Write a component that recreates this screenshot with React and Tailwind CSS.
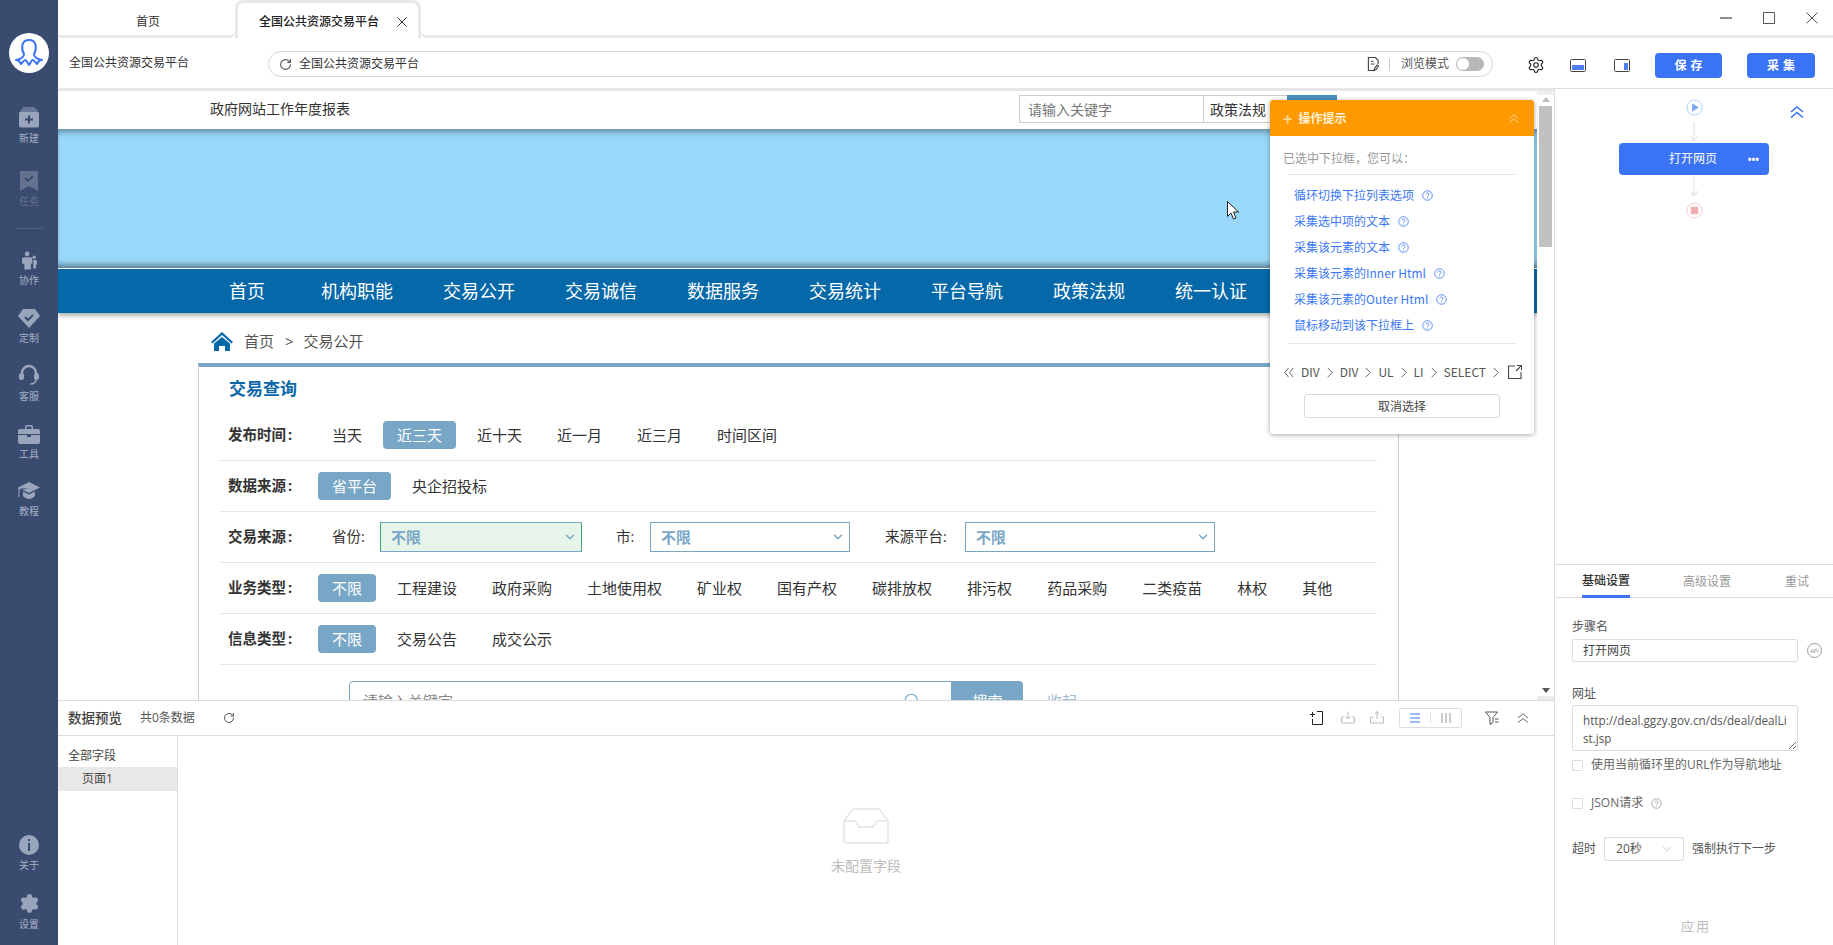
import React from "react";
import { ChevronDown, RotateCw, Search, Settings } from "lucide-react";

const navItems = ["机构职能", "交易公开", "交易诚信", "数据服务", "交易统计", "平台导航", "政策法规", "统一认证"];
const bizTypes = ["工程建设", "政府采购", "土地使用权", "矿业权", "国有产权", "碳排放权", "排污权", "药品采购", "二类疫苗", "林权", "其他"];
const tipLinks = [
  "循环切换下拉列表选项",
  "采集选中项的文本",
  "采集该元素的文本",
  "采集该元素的Inner Html",
  "采集该元素的Outer Html",
  "鼠标移动到该下拉框上",
];

const Help = ({ color = "#3b78f5" }) => (
  <svg viewBox="0 0 12 12" className="ml-[8px] h-[11px] w-[11px] shrink-0" fill="none" stroke={color}>
    <circle cx="6" cy="6" r="5.2" strokeWidth="0.9" />
    <path d="M4.4 4.8a1.6 1.6 0 1 1 2.4 1.4c-.6.35-.8.6-.8 1.2M6 8.5v1" strokeWidth="0.9" />
  </svg>
);

const Gt = () => (
  <svg viewBox="0 0 6 12" className="h-[11px] w-[6px] shrink-0" fill="none" stroke="#555" strokeWidth="1">
    <path d="M.5 1 5.5 6 .5 11" />
  </svg>
);

const DoubleUp = ({ className, width = 1 }) => (
  <svg viewBox="0 0 14 12" className={className} fill="none" stroke="currentColor" strokeWidth={width}>
    <path d="M1 6 7 1l6 5M1 11.500 7 6.500l6 5" />
  </svg>
);

const SideItem = ({ label, dim, className, children }) => (
  <div className={`flex flex-col items-center ${className}`}>
    <div className={`flex h-[22px] items-end ${dim ? "text-[#65728f]" : "text-[#98a5bb]"}`}>{children}</div>
    <span className={`mt-[3px] text-[10px] leading-[14px] ${dim ? "text-[#65728f]" : "text-[#a6b1c5]"}`}>{label}</span>
  </div>
);

const Sidebar = () => (
  <aside className="flex h-full w-[58px] shrink-0 flex-col items-center bg-[#3a4b70]">
    <div className="mt-[33px] h-[40px] w-[40px] rounded-full bg-white">
      <svg viewBox="0 0 40 40" className="h-[40px] w-[40px]" fill="none" stroke="#3b73f5" strokeWidth="2" strokeLinejoin="round">
        <path d="M15 21C12 16 12 7 20 7s8 9 5 14c0 3 3 5 8 6-3 0-4 2-5 4-2-2-3-4-4.500-4-1 0-2 3-3.500 5-1.500-2-2.500-5-3.500-5-1.500 0-2.500 2-4.500 4-1-2-2-4-5-4 5-1 8-3 8-6Z" />
      </svg>
    </div>
    <SideItem label="新建" className="mt-[33px]">
      <svg viewBox="0 0 20 20" className="h-[21px] w-[20px]" fill="currentColor">
        <path d="M4 0h12v1H4zM2 2h16v1H2z" />
        <rect y="4" width="20" height="16" rx="2" />
        <path d="M9 8h2v3h3v2h-3v3H9v-3H6v-2h3z" fill="#3a4b70" />
      </svg>
    </SideItem>
    <SideItem label="任务" dim className="mt-[24px]">
      <svg viewBox="0 0 18 20" className="h-[20px] w-[18px]" fill="currentColor">
        <path d="M0 0h18v20l-9-5-9 5z" />
        <path d="m5 7 3 3 5-5" fill="none" stroke="#3a4b70" strokeWidth="1.800" />
      </svg>
    </SideItem>
    <div className="mt-[20px] h-px w-[28px] bg-[#4f5f82]" />
    <SideItem label="协作" className="mt-[19px]">
      <svg viewBox="0 0 16 19" className="h-[19px] w-[15px]" fill="currentColor">
        <circle cx="5.500" cy="2.500" r="2.500" />
        <path d="M2 6h7a2 2 0 0 1 2 2v5H9.500v6h-7v-6H0V8a2 2 0 0 1 2-2z" />
        <circle cx="13" cy="6" r="1.800" />
        <path d="M12 9h2.500a1.500 1.500 0 0 1 1.500 1.500V14h-1v4h-3z" />
      </svg>
    </SideItem>
    <SideItem label="定制" className="mt-[19px]">
      <svg viewBox="0 0 22 19" className="h-[19px] w-[22px]" fill="currentColor">
        <path d="M5 0h12l5 7-11 12L0 7z" />
        <path d="m7 8 3 3 5-5" fill="none" stroke="#3a4b70" strokeWidth="2" />
      </svg>
    </SideItem>
    <SideItem label="客服" className="mt-[19px]">
      <svg viewBox="0 0 20 22" className="h-[22px] w-[20px]" fill="none" stroke="currentColor">
        <path d="M3 11V9a7 7 0 0 1 14 0v2" strokeWidth="2.500" />
        <rect x="0" y="9" width="5" height="7" rx="2.500" fill="currentColor" stroke="none" />
        <rect x="15" y="9" width="5" height="7" rx="2.500" fill="currentColor" stroke="none" />
        <path d="M17 15c0 3-2 5-6 5" strokeWidth="1.500" />
      </svg>
    </SideItem>
    <SideItem label="工具" className="mt-[19px]">
      <svg viewBox="0 0 22 19" className="h-[19px] w-[22px]" fill="currentColor">
        <path d="M7 4V1.500A1.500 1.500 0 0 1 8.500 0h5A1.500 1.500 0 0 1 15 1.500V4h-1.500V1.500h-5V4z" />
        <path d="M2 4h18a2 2 0 0 1 2 2v3H0V6a2 2 0 0 1 2-2zM0 10h9v2h4v-2h9v7a2 2 0 0 1-2 2H2a2 2 0 0 1-2-2z" />
      </svg>
    </SideItem>
    <SideItem label="教程" className="mt-[18px]">
      <svg viewBox="0 0 22 19" className="h-[19px] w-[22px]" fill="currentColor">
        <path d="M11 0 22 5.500 11 11 4 7.500 11 6 3 6.500 1.500 8v7H.5V7L0 5.500z" />
        <path d="M5 9.500 11 12.500 17 9.500V14c-2 2-4 3-6 3s-4-1-6-3z" />
      </svg>
    </SideItem>
    <SideItem label="关于" className="mt-auto">
      <svg viewBox="0 0 20 20" className="h-[20px] w-[20px]">
        <circle cx="10" cy="10" r="10" fill="currentColor" />
        <path d="M9 4h2v2H9zM9 8h2v8H9z" fill="#3a4b70" />
      </svg>
    </SideItem>
    <SideItem label="设置" className="mt-[20px] mb-[14px]">
      <Settings size={21} fill="currentColor" stroke="currentColor" strokeWidth={1.5} />
    </SideItem>
  </aside>
);

const TabBar = () => (
  <div className="flex h-[38px] shrink-0 text-[12px]">
    <div className="flex w-[177px] items-center justify-center rounded-br-md border-b-[3px] border-[#e8e8e8] pt-[8px] pl-[3px] text-[#333]">首页</div>
    <div className="flex w-[186px] items-center rounded-t-lg border-x-[3px] border-t-[3px] border-[#e8e8e8] pl-[21px] pt-[2px] font-medium text-[#222]">
      全国公共资源交易平台
      <svg viewBox="0 0 10 10" className="ml-[18px] h-[10px] w-[10px]" fill="none" stroke="#333">
        <path d="m.5.5 9 9M9.500.5l-9 9" />
      </svg>
    </div>
    <div className="flex flex-1 items-center justify-end gap-[31px] rounded-bl-md border-b-[3px] border-[#e8e8e8] pr-[15px]">
      <svg viewBox="0 0 12 12" className="h-[12px] w-[12px]" stroke="#666" strokeWidth="1.500">
        <path d="M0 6h12" />
      </svg>
      <svg viewBox="0 0 12 12" className="h-[12px] w-[12px]" fill="none" stroke="#555">
        <path d="M.5.5h11v11H.5z" />
      </svg>
      <svg viewBox="0 0 12 12" className="h-[12px] w-[12px]" fill="none" stroke="#555">
        <path d="m.5.5 11 11M11.500.5l-11 11" />
      </svg>
    </div>
  </div>
);

const AddressBar = () => (
  <div className="flex h-[50px] shrink-0 items-center text-[12px] text-[#333]">
    <span className="w-[210px] pl-[11px]">全国公共资源交易平台</span>
    <div className="mt-[2px] flex h-[26px] w-[1225px] items-center rounded-full border border-[#d8d8d8] pl-[10px] pr-[8px]">
      <RotateCw size={13} className="text-[#555]" />
      <span className="ml-[7px]">全国公共资源交易平台</span>
      <svg viewBox="0 0 14 16" className="ml-auto h-[16px] w-[13px]" fill="none" stroke="#444" strokeWidth="1.200">
        <path d="M9 1H1.500v14H7M9 1l3 3v4M4 5h3M4 8h4M11 9l-3 4-.5 2 2-.8 3-4z" />
      </svg>
      <div className="ml-[9px] h-[13px] w-px bg-[#ccc]" />
      <span className="ml-[11px] text-[#555]">浏览模式</span>
      <div className="ml-[7px] flex h-[14px] w-[28px] items-center rounded-full bg-[#b8b8b8]">
        <div className="h-[12px] w-[12px] translate-x-px rounded-full bg-white" />
      </div>
    </div>
    <Settings size={18} strokeWidth={1.5} className="ml-[34px] mt-[4px] text-[#222]" />
    <svg viewBox="0 0 16 13" className="ml-[25px] mt-[5px] h-[13px] w-[16px]" fill="none">
      <rect x=".5" y=".5" width="15" height="12" rx="1" stroke="#444" />
      <rect x="2" y="6" width="12" height="5" fill="#4f7df5" />
    </svg>
    <svg viewBox="0 0 16 13" className="ml-[28px] mt-[5px] h-[13px] w-[16px]" fill="none">
      <rect x=".5" y=".5" width="15" height="12" rx="1" stroke="#444" />
      <rect x="10" y="4" width="4" height="7" fill="#4f7df5" />
    </svg>
    <button className="ml-[25px] mt-[5px] h-[25px] w-[67px] rounded bg-[#3b73f5] pl-[4px] text-[12px] font-bold tracking-[4px] text-white">保存</button>
    <button className="ml-[25px] mt-[5px] h-[25px] w-[68px] rounded bg-[#3b73f5] pl-[4px] text-[12px] font-bold tracking-[4px] text-white">采集</button>
  </div>
);

const Pill = ({ active, children }) => (
  <span className={`flex h-[28px] items-center rounded px-[14px] text-[15px] ${active ? "bg-[#78a6c6] text-white" : "text-[#333]"}`}>{children}</span>
);

const FilterRow = ({ label, children }) => (
  <div className="flex h-[51px] items-center border-b border-[#e8e8e8] pl-[9px]">
    <span className="w-[90px] shrink-0 text-[14.500px] font-bold text-[#333]">
      {label}
      <span className="ml-[2px]">:</span>
    </span>
    <div className="flex items-center gap-[7px]">{children}</div>
  </div>
);

const FakeSelect = ({ className }) => (
  <div className={`flex h-[30px] items-center justify-between border pl-[10px] pr-[4px] text-[15px] font-bold text-[#78a6c6] ${className}`}>
    不限
    <ChevronDown size={14} strokeWidth={2.5} />
  </div>
);

const SourcePage = () => (
  <div className="h-full w-[1479px] shrink-0 overflow-hidden bg-white">
    <div className="flex h-[38px] items-start pr-[200px] pl-[152px] pt-[4px] text-[14px] text-[#333]">
      <span className="leading-[28px]">政府网站工作年度报表</span>
      <div className="ml-auto flex h-[28px] w-[185px] items-center border border-[#ccc] pl-[8px] text-[#777]">请输入关键字</div>
      <div className="flex h-[28px] w-[83px] items-center border-y border-[#ccc] pl-[6px]">政策法规</div>
      <div className="h-[28px] w-[50px] bg-[#4a8fbf]" />
    </div>
    <div className="h-[139px] bg-[#9ad8f9] shadow-[inset_0_7px_6px_-4px_rgba(0,0,0,0.35),inset_0_-7px_6px_-4px_rgba(0,0,0,0.45)]" />
    <div className="relative mt-px flex h-[44px] items-center bg-[#0568a9] pl-[171px] text-[18px] text-white shadow-[0_3px_4px_rgba(0,0,0,0.3)]">
      <span className="mr-[56px]">首页</span>
      <div className="flex gap-[50px]">
        {navItems.map((n) => (
          <span key={n}>{n}</span>
        ))}
      </div>
    </div>
    <div className="flex h-[50px] items-center pl-[153px] pt-[6px] text-[15px] text-[#555]">
      <svg viewBox="0 0 22 19" className="h-[19px] w-[22px]" fill="#0568a9">
        <path d="M11 0 22 10l-1.500 1.500L11 3 1.500 11.500 0 10z" />
        <path d="M3 11.500 11 5l8 6.500V19h-5v-5H8v5H3z" />
      </svg>
      <span className="ml-[11px]">首页</span>
      <span className="ml-[11px]">&gt;</span>
      <span className="ml-[10px]">交易公开</span>
    </div>
    <div className="ml-[140px] h-[400px] w-[1201px] border-x border-t-4 border-x-[#ccc] border-t-[#78a6c6]">
      <div className="flex h-[43px] items-center pl-[30px] pt-[1px] text-[17px] font-bold text-[#0b68a8]">交易查询</div>
      <div className="ml-[20px] w-[1158px]">
        <FilterRow label="发布时间">
          <Pill>当天</Pill>
          <Pill active>近三天</Pill>
          <Pill>近十天</Pill>
          <Pill>近一月</Pill>
          <Pill>近三月</Pill>
          <Pill>时间区间</Pill>
        </FilterRow>
        <FilterRow label="数据来源">
          <Pill active>省平台</Pill>
          <Pill>央企招投标</Pill>
        </FilterRow>
        <FilterRow label="交易来源">
          <span className="ml-[14px] mr-[5px] w-[36px] whitespace-nowrap text-[14.500px] text-[#333]">省份:</span>
          <FakeSelect className="w-[202px] border-[#78a6c6] border-x-[#3fa672] bg-[#e6f4e9]" />
          <span className="ml-[27px] mr-[7px] w-[20px] whitespace-nowrap text-[14.500px] text-[#333]">市:</span>
          <FakeSelect className="w-[200px] border-[#78a6c6]" />
          <span className="ml-[28px] mr-[7px] w-[66px] whitespace-nowrap text-[14.500px] text-[#333]">来源平台:</span>
          <FakeSelect className="w-[250px] border-[#78a6c6]" />
        </FilterRow>
        <FilterRow label="业务类型">
          <Pill active>不限</Pill>
          {bizTypes.map((t) => (
            <Pill key={t}>{t}</Pill>
          ))}
        </FilterRow>
        <FilterRow label="信息类型">
          <Pill active>不限</Pill>
          <Pill>交易公告</Pill>
          <Pill>成交公示</Pill>
        </FilterRow>
      </div>
      <div className="ml-[150px] mt-[16px] flex h-[40px] items-center">
        <div className="flex h-full w-[603px] items-center justify-between rounded-tl border border-[#78a6c6] pl-[13px] pr-[30px] text-[15px] text-[#888]">
          请输入关键字
          <Search size={18} strokeWidth={1.5} className="text-[#78a6c6]" />
        </div>
        <div className="flex h-full w-[71px] items-center justify-center rounded-tr bg-[#78a6c6] text-[15px] text-white">搜索</div>
        <span className="ml-[24px] text-[15px] text-[#9bbdd6]">收起 ·</span>
      </div>
    </div>
  </div>
);

const TipPopover = () => (
  <div className="absolute left-[1212px] top-[9px] z-20 h-[334px] w-[264px] rounded-[3px] bg-white font-['Noto_Sans_CJK_SC',sans-serif] shadow-[0_1px_5px_rgba(0,0,0,0.35)]">
    <div className="flex h-[36px] items-center rounded-t-[3px] bg-[#fe9a00] pl-[13px] pr-[15px] text-[12px] font-bold text-white">
      <span className="text-[16px] leading-none text-[#ffd699]">+</span>
      <span className="ml-[6px] text-[#fff1da]">操作提示</span>
      <DoubleUp className="ml-auto h-[9px] w-[10px] text-[#fff1da]" />
    </div>
    <div className="flex h-[38px] items-center pl-[13px] pt-[6px] text-[12px] text-[#999]">已选中下拉框，您可以：</div>
    <div className="mx-[18px] h-px bg-[#e6e6e6]" />
    <ul className="pb-[5px] pl-[24px] pt-[7px] text-[12px] text-[#3b78f5]">
      {tipLinks.map((t) => (
        <li key={t} className="flex h-[26px] items-center">
          {t}
          <Help />
        </li>
      ))}
    </ul>
    <div className="mx-[18px] h-px bg-[#e6e6e6]" />
    <div className="mt-[6px] flex h-[44px] items-center gap-[7px] pl-[14px] pr-[12px] text-[12px] text-[#555]">
      <svg viewBox="0 0 10 12" className="h-[11px] w-[10px]" fill="none" stroke="#555">
        <path d="M4.500 1 .5 6l4 5M9.500 1l-4 5 4 5" />
      </svg>
      DIV
      <Gt />
      DIV
      <Gt />
      UL
      <Gt />
      LI
      <Gt />
      SELECT
      <Gt />
      <svg viewBox="0 0 14 14" className="ml-auto h-[14px] w-[14px]" fill="none" stroke="#444" strokeWidth="1.100">
        <path d="M7 1H.5v12.500H13V7M8 6l5.500-5.500M9 .5h4.500V5" />
      </svg>
    </div>
    <div className="mx-auto flex h-[24px] w-[196px] items-center justify-center rounded-[3px] border border-[#d8d8d8] text-[12px] text-[#444]">取消选择</div>
  </div>
);

const WebView = () => (
  <div className="relative flex h-[612px] shrink-0 border-t-[3px] border-[#e6e6e6]">
    <SourcePage />
    <TipPopover />
    <div className="flex w-[17px] shrink-0 flex-col items-center bg-white">
      <div className="h-[4px] w-full bg-[#efefef]" />
      <div className="mt-[2px] h-0 w-0 border-x-[4px] border-b-[5px] border-x-transparent border-b-[#bbb]" />
      <div className="mt-[4px] h-[141px] w-[13px] bg-[#c1c1c1]" />
      <div className="mt-auto h-0 w-0 border-x-[4px] border-t-[5px] border-x-transparent border-t-[#555]" />
      <div className="mt-[3px] h-[4px] w-full bg-[#ececec]" />
    </div>
    <svg viewBox="0 0 12 19" className="absolute left-[1169px] top-[110px] z-10 h-[19px] w-[12px]" fill="#fff" stroke="#222" strokeWidth="1">
      <path d="M.5.5v15l3.500-3.500 2.500 6 2.500-1-2.500-6h5z" />
    </svg>
  </div>
);

const ToolIcon = ({ children }) => (
  <svg viewBox="0 0 14 14" className="h-[14px] w-[14px]" fill="none" stroke="currentColor" strokeWidth="1">
    {children}
  </svg>
);

const DataPreview = () => (
  <div className="flex h-[245px] shrink-0 flex-col border-t border-[#ddd] bg-white">
    <div className="flex h-[35px] shrink-0 items-center border-b border-[#ddd] pl-[10px] pr-[25px]">
      <span className="text-[13.500px] font-medium text-[#444]">数据预览</span>
      <span className="ml-[18px] text-[12px] text-[#555]">共0条数据</span>
      <RotateCw size={12} className="ml-[28px] text-[#555]" />
      <div className="ml-auto flex items-center">
        <span className="text-[#222]">
          <ToolIcon>
            <path d="M7 .5h5.500v13H2.500V8M2.500 1v5M0 3.500h5" />
          </ToolIcon>
        </span>
        <span className="ml-[17px] text-[#bbb]">
          <ToolIcon>
            <path d="M7 .5V8M4.500 5.500 7 8l2.500-2.500M3 6H.5v6h13V6H11" />
          </ToolIcon>
        </span>
        <span className="ml-[15px] text-[#bbb]">
          <ToolIcon>
            <path d="M7 8V.5M4.500 3 7 .5 9.500 3M3 6H.5v6h13V6H11" />
          </ToolIcon>
        </span>
        <div className="ml-[15px] flex h-[20px] w-[63px] items-center rounded-[2px] border border-[#ddd] pl-[10px]">
          <svg viewBox="0 0 10 10" className="h-[10px] w-[10px]" stroke="#3b78f5">
            <path d="M0 1h10M0 5h10M0 9h10" />
          </svg>
          <div className="ml-[10px] h-[10px] w-px bg-[#ddd]" />
          <svg viewBox="0 0 10 10" className="ml-[10px] h-[10px] w-[10px]" stroke="#999">
            <path d="M1 0v10M5 0v10M9 0v10" />
          </svg>
        </div>
        <span className="ml-[23px] text-[#555]">
          <ToolIcon>
            <path d="M.5 1h12L8 6.500v5l-3 2v-7zM10 8h3.500M10 11h3.500" />
          </ToolIcon>
        </span>
        <DoubleUp className="ml-[18px] h-[10px] w-[12px] text-[#444]" />
      </div>
    </div>
    <div className="flex flex-1">
      <div className="w-[120px] shrink-0 border-r border-[#ddd] pt-[9px] text-[12px] text-[#444]">
        <div className="h-[22px] pl-[10px] leading-[22px]">全部字段</div>
        <div className="h-[24px] bg-[#e8e8e8] pl-[24px] leading-[24px]">页面1</div>
      </div>
      <div className="flex flex-1 flex-col items-center pt-[72px]">
        <svg viewBox="0 0 46 36" className="h-[36px] w-[46px]" fill="none" stroke="#e4e4e4" strokeWidth="1.500">
          <path d="M10 1h26l9 12v20a2 2 0 0 1-2 2H3a2 2 0 0 1-2-2V13zM1 13h11c2 0 2 6 5 6h12c3 0 3-6 5-6h11" />
        </svg>
        <span className="mt-[11px] text-[14px] text-[#bbb]">未配置字段</span>
      </div>
    </div>
  </div>
);

const FlowArrow = () => (
  <svg viewBox="0 0 10 20" className="h-[20px] w-[10px]" fill="none" stroke="#ddd" strokeWidth="1">
    <path d="M5 0v19M1.500 14 5 19l3.500-5" />
  </svg>
);

const FlowPanel = () => (
  <div className="relative flex h-[476px] shrink-0 flex-col items-center border-b border-[#ddd] pt-[10px]">
    <svg viewBox="0 0 18 18" className="h-[17px] w-[17px]">
      <circle cx="9" cy="9" r="8" fill="none" stroke="#a9cdf6" />
      <path d="M6.500 4.500v9l7-4.500z" fill="#7fa6f5" />
    </svg>
    <div className="mt-[6px]">
      <FlowArrow />
    </div>
    <div className="mt-[1px] flex h-[32px] w-[150px] shrink-0 items-center justify-between rounded-[4px] bg-[#3b73f5] pl-[50px] pr-[10px] text-[12px] text-white">
      打开网页
      <span className="text-[10px] font-bold leading-none">•••</span>
    </div>
    <div className="mt-[2px]">
      <FlowArrow />
    </div>
    <svg viewBox="0 0 18 18" className="mt-[5px] h-[17px] w-[17px]">
      <circle cx="9" cy="9" r="8" fill="none" stroke="#f4c9c9" />
      <rect x="5" y="5" width="8" height="8" fill="#edafb0" />
    </svg>
    <DoubleUp width={1.6} className="absolute left-[235px] top-[17px] h-[12px] w-[14px] text-[#3b73f5]" />
  </div>
);

const StepSettings = () => (
  <div className="flex flex-1 flex-col text-[12px] text-[#555]">
    <div className="flex h-[33px] shrink-0 border-b border-[#ddd] pl-[27px] text-[#999]">
      <span className="-mb-px flex h-[33px] items-center border-b-[3px] border-[#3b73f5] pt-[2px] font-medium text-[#333]">基础设置</span>
      <span className="ml-[53px] flex items-center pt-[2px]">高级设置</span>
      <span className="ml-[54px] flex items-center pt-[2px]">重试</span>
    </div>
    <div className="pl-[17px]">
      <div className="mt-[21px] h-[16px] leading-[16px]">步骤名</div>
      <div className="mt-[4px] flex items-center">
        <div className="flex h-[23px] w-[226px] items-center rounded-[2px] border border-[#ddd] pl-[10px] text-[#444]">打开网页</div>
        <svg viewBox="0 0 15 15" className="ml-[9px] h-[15px] w-[15px]" fill="none" stroke="#999">
          <circle cx="7.500" cy="7.500" r="7" />
          <text x="7.500" y="9.800" fontSize="5.500" textAnchor="middle" fill="#888" stroke="none">API</text>
        </svg>
      </div>
      <div className="mt-[24px] h-[16px] leading-[16px]">网址</div>
      <textarea
        readOnly
        value="http://deal.ggzy.gov.cn/ds/deal/dealList.jsp"
        className="mt-[3px] block h-[46px] w-[226px] resize overflow-hidden break-all rounded-[2px] border border-[#ddd] px-[10px] py-[5px] text-[11.700px] leading-[18px] text-[#555] outline-none"
      />
      <label className="mt-[6px] flex h-[16px] items-center">
        <span className="h-[11px] w-[11px] rounded-[1px] border border-[#ddd]" />
        <span className="ml-[8px] text-[#666]">使用当前循环里的URL作为导航地址</span>
      </label>
      <label className="mt-[22px] flex h-[16px] items-center">
        <span className="h-[11px] w-[11px] rounded-[1px] border border-[#ddd]" />
        <span className="ml-[8px] text-[#666]">JSON请求</span>
        <Help color="#999" />
      </label>
      <div className="mt-[26px] flex h-[24px] items-center">
        <span>超时</span>
        <div className="ml-[8px] flex h-[24px] w-[80px] items-center justify-between rounded-[2px] border border-[#ddd] pl-[11px] pr-[9px]">
          20秒
          <ChevronDown size={14} strokeWidth={1} className="text-[#999]" />
        </div>
        <span className="ml-[8px]">强制执行下一步</span>
      </div>
      <div className="ml-[109px] mt-[56px] text-[13px] tracking-[2px] text-[#bbb]">应用</div>
    </div>
  </div>
);

const App = () => (
  <div className="flex h-[945px] w-[1833px] overflow-hidden bg-white font-['Open_Sans','Noto_Sans_CJK_SC',sans-serif]">
    <Sidebar />
    <div className="flex min-w-0 flex-1 flex-col">
      <TabBar />
      <AddressBar />
      <div className="flex h-[857px]">
        <div className="flex w-[1496px] shrink-0 flex-col">
          <WebView />
          <DataPreview />
        </div>
        <div className="flex w-[279px] shrink-0 flex-col border-l border-t border-[#ddd]">
          <FlowPanel />
          <StepSettings />
        </div>
      </div>
    </div>
  </div>
);

export default App;
